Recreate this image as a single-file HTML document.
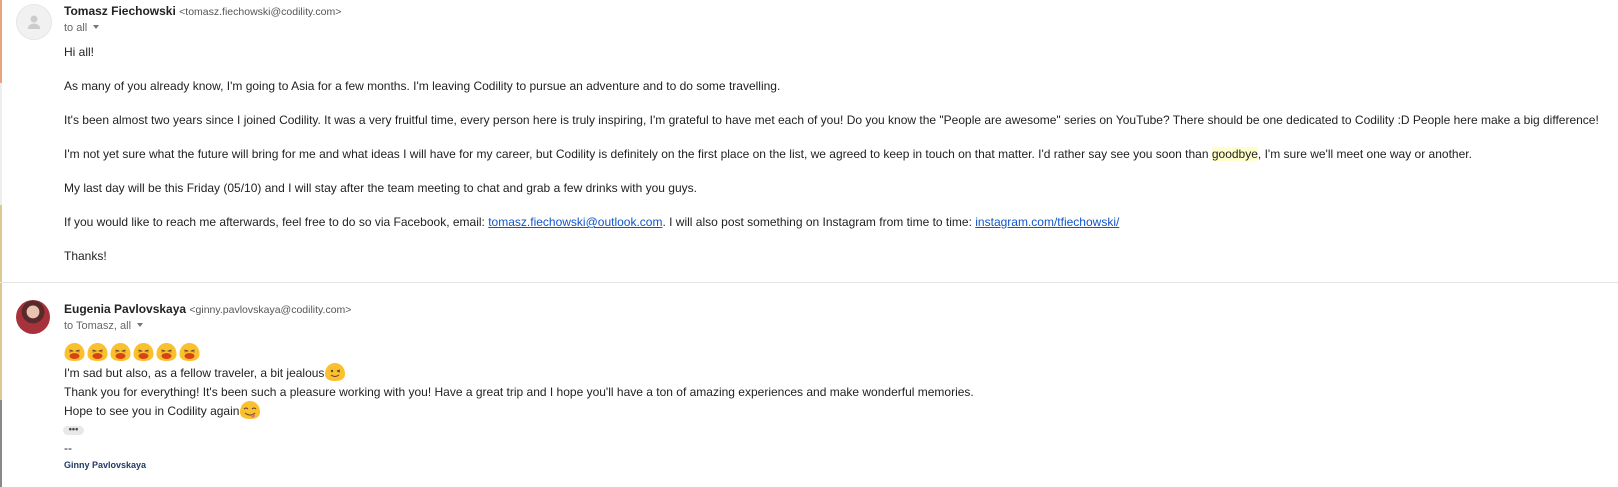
<!DOCTYPE html>
<html><head><meta charset="utf-8"><style>
body{margin:0;width:1618px;height:487px;background:#fff;font-family:"Liberation Sans",Arial,sans-serif;color:#222;position:relative;overflow:hidden}
.stripe{position:absolute;left:0;width:2px}
.av{position:absolute;left:16px;width:34px;height:34px;border-radius:50%}
.name{position:absolute;left:64px;font-size:12px;font-weight:bold;color:#222}
.name span{font-weight:normal;font-size:10.5px;color:#555}
.to{position:absolute;left:64px;font-size:11px;color:#666}
.to i{display:inline-block;width:0;height:0;border-left:3.5px solid transparent;border-right:3.5px solid transparent;border-top:4px solid #777;margin-left:6px;vertical-align:2px}
.p{position:absolute;left:64px;font-size:12px;line-height:15px;white-space:nowrap;color:#222}
a{color:#1155cc;text-decoration:underline}
.hl{background:#ffffcc}
.emo{display:inline-block;width:22px;height:12px;position:relative;vertical-align:-2px}
.emo svg{position:absolute;left:0;top:-5px;width:22px;height:20px}
</style></head><body>
<div class="stripe" style="top:0;height:83px;background:#e8a383"></div>
<div class="stripe" style="top:83px;height:122px;background:#eee"></div>
<div class="stripe" style="top:205px;height:195px;background:#dcc992"></div>
<div class="stripe" style="top:400px;height:87px;background:#888"></div>

<div class="av" style="top:4px;background:#f1f1f1;border:1px solid #e6e6e6">
<svg width="34" height="34" viewBox="0 0 34 34"><circle cx="17" cy="14" r="3.5" fill="#ccc"/><path d="M11 23c0-3 4-4.5 6-4.5s6 1.5 6 4.5v1H11z" fill="#ccc"/></svg></div>
<div class="name" style="top:4px">Tomasz Fiechowski <span>&lt;tomasz.fiechowski@codility.com&gt;</span></div>
<div class="to" style="top:22px">to all<i></i></div>

<div class="p" style="top:45px">Hi all!</div>
<div class="p" style="top:79px">As many of you already know, I'm going to Asia for a few months. I'm leaving Codility to pursue an adventure and to do some travelling.</div>
<div class="p" style="top:113px">It's been almost two years since I joined Codility. It was a very fruitful time, every person here is truly inspiring, I'm grateful to have met each of you! Do you know the "People are awesome" series on YouTube? There should be one dedicated to Codility :D People here make a big difference!</div>
<div class="p" style="top:147px">I'm not yet sure what the future will bring for me and what ideas I will have for my career, but Codility is definitely on the first place on the list, we agreed to keep in touch on that matter. I'd rather say see you soon than <span class="hl">goodbye</span>, I'm sure we'll meet one way or another.</div>
<div class="p" style="top:181px">My last day will be this Friday (05/10) and I will stay after the team meeting to chat and grab a few drinks with you guys.</div>
<div class="p" style="top:215px">If you would like to reach me afterwards, feel free to do so via Facebook, email: <a>tomasz.fiechowski@outlook.com</a>. I will also post something on Instagram from time to time: <a>instagram.com/tfiechowski/</a></div>
<div class="p" style="top:249px">Thanks!</div>

<div style="position:absolute;left:0;right:0;top:282px;height:1px;background:#e5e5e5"></div>

<div class="av" style="top:300px;background:radial-gradient(circle at 50% 35%,#e9c4b0 0 22%,#5a2a2a 24% 40%,#a8323c 42% 100%)"></div>
<div class="name" style="top:302px">Eugenia Pavlovskaya <span>&lt;ginny.pavlovskaya@codility.com&gt;</span></div>
<div class="to" style="top:320px">to Tomasz, all<i></i></div>

<svg width="0" height="0" style="position:absolute"><defs>
<symbol id="blob" viewBox="0 0 22 20"><path d="M11 1C5 1 1 6 1 12c0 5 4 7 10 7s10-2 10-7C21 6 17 1 11 1z" fill="#fbc02d"/></symbol>
<symbol id="cry" viewBox="0 0 22 20"><use href="#blob"/><path d="M6 8l3 1-3 1M16 8l-3 1 3 1" stroke="#5d4037" stroke-width="1" fill="none"/><ellipse cx="11" cy="14" rx="5" ry="3" fill="#d84315"/></symbol>
</defs></svg>
<div style="position:absolute;left:63px;top:342px;height:20px">
<svg width="23" height="20" viewBox="0 0 22 20"><use href="#cry"/></svg><svg width="23" height="20" viewBox="0 0 22 20"><use href="#cry"/></svg><svg width="23" height="20" viewBox="0 0 22 20"><use href="#cry"/></svg><svg width="23" height="20" viewBox="0 0 22 20"><use href="#cry"/></svg><svg width="23" height="20" viewBox="0 0 22 20"><use href="#cry"/></svg><svg width="23" height="20" viewBox="0 0 22 20"><use href="#cry"/></svg>
</div>
<div class="p" style="top:366px">I'm sad but also, as a fellow traveler, a bit jealous<span class="emo"><svg viewBox="0 0 22 20"><use href="#blob"/><circle cx="8" cy="9" r="1.2" fill="#5d4037"/><path d="M13 9l3-1M13 9l3 1M7 13q4 3 8 0" stroke="#5d4037" stroke-width="1" fill="none"/></svg></span></div>
<div class="p" style="top:385px">Thank you for everything! It's been such a pleasure working with you! Have a great trip and I hope you'll have a ton of amazing experiences and make wonderful memories.</div>
<div class="p" style="top:404px">Hope to see you in Codility again<span class="emo"><svg viewBox="0 0 22 20"><use href="#blob"/><path d="M5 9q2-2 4 0M13 9q2-2 4 0M6 13q5 4 10 0" stroke="#5d4037" stroke-width="1" fill="none"/><ellipse cx="14" cy="16" rx="2" ry="1.6" fill="#e57373"/></svg></span></div>
<div style="position:absolute;left:63px;top:426px;width:21px;height:9px;border-radius:5px;background:#e8e8e8;font-size:9px;line-height:6px;text-align:center;color:#444;font-weight:bold">•••</div>
<div class="p" style="top:441px;font-size:12px">--</div>
<div class="p" style="top:458px;font-size:9px;font-weight:bold;color:#1f3a66">Ginny Pavlovskaya</div>
</body></html>
